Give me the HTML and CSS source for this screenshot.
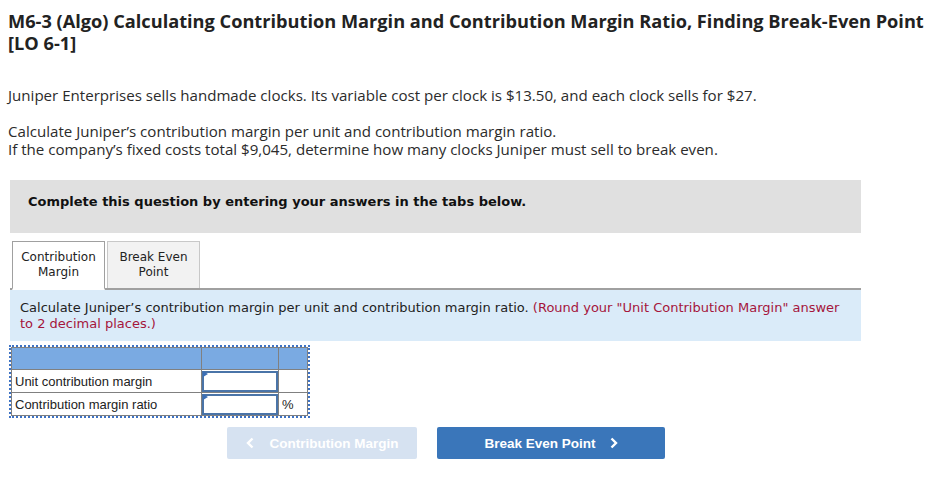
FILE: index.html
```html
<!DOCTYPE html>
<html>
<head>
<meta charset="utf-8">
<link rel="stylesheet" href="styles.css">
</head>
<body>
<div class="page">
  <h1 class="title">M6-3 (Algo) Calculating Contribution Margin and Contribution Margin Ratio, Finding Break-Even Point <span class="nowrap">[LO 6-1]</span></h1>
  <p class="intro first">Juniper Enterprises sells handmade clocks. Its variable cost per clock is $13.50, and each clock sells for $27.</p>
  <p class="intro">Calculate Juniper’s contribution margin per unit and contribution margin ratio.<br>If the company’s fixed costs total $9,045, determine how many clocks Juniper must sell to break even.</p>

  <div class="notice">Complete this question by entering your answers in the tabs below.</div>

  <div class="tabs">
    <div class="tab active">Contribution<br>Margin</div>
    <div class="tab">Break Even<br>Point</div>
  </div>
  <div class="instr">Calculate Juniper’s contribution margin per unit and contribution margin ratio. <span class="hint">(Round your "Unit Contribution Margin" answer to 2 decimal places.)</span></div>

  <div class="tablewrap">
    <table class="grid">
      <tr class="head"><td class="c1"></td><td class="c2"></td><td class="c3"></td></tr>
      <tr><td class="c1">Unit contribution margin</td><td class="c2 inp"><div class="box"><span class="flag"></span></div></td><td class="c3"></td></tr>
      <tr><td class="c1">Contribution margin ratio</td><td class="c2 inp"><div class="box"><span class="flag"></span></div></td><td class="c3">%</td></tr>
    </table>
  </div>

  <div class="nav">
    <div class="btn prev"><svg class="chev" width="8" height="12" viewBox="0 0 8 12"><path d="M6.5 1.5 L2 6 L6.5 10.5" fill="none" stroke="#fff" stroke-width="2.4"/></svg>Contribution Margin</div>
    <div class="btn next">Break Even Point<svg class="chev" width="8" height="12" viewBox="0 0 8 12"><path d="M1.5 1.5 L6 6 L1.5 10.5" fill="none" stroke="#fff" stroke-width="2.4"/></svg></div>
  </div>
</div>
</body>
</html>
```
FILE: styles.css
```css
html, body { margin: 0; padding: 0; background: #fff; }
.page { padding: 10px 8px 0 8px; width: 935px; }
.title {
  font-family: "Open Sans", "Liberation Sans", sans-serif;
  font-weight: 700;
  font-size: 18.2px;
  line-height: 22px;
  color: #222;
  margin: 0;
  width: 935px;
}
.nowrap { white-space: nowrap; }
.intro {
  font-family: "Open Sans", "Liberation Sans", sans-serif;
  font-size: 15.1px;
  line-height: 18px;
  color: #2b2b2b;
  margin: 18px 0 0 0;
}
.intro.first { margin-top: 32px; }
.notice {
  margin: 22px 0 0 2px;
  width: 851px;
  height: 53px;
  box-sizing: border-box;
  padding: 13px 18px 0 18px;
  background: #e0e0e0;
  font-family: "DejaVu Sans", Verdana, sans-serif;
  font-weight: 700;
  font-size: 13px;
  line-height: 18px;
  color: #111;
}
.tabs {
  display: flex;
  gap: 2px;
  margin: 8px 0 0 2px;
  width: 851px;
  border-bottom: 2px solid #a0a0a0;
  padding-left: 2px;
  box-sizing: border-box;
}
.tab {
  width: 93px;
  height: 47px;
  box-sizing: border-box;
  margin-bottom: -2px;
  padding-top: 8px;
  text-align: center;
  font-family: "DejaVu Sans", Verdana, sans-serif;
  font-size: 12px;
  line-height: 15px;
  color: #222;
  background: #f2f2f2;
  border: 1px solid #c8c8c8;
  border-bottom: none;
}
.tab.active {
  background: #fff;
  border: 1px solid #a0a0a0;
  border-bottom: 2px solid #fff;
  height: 49px;
}
.instr {
  margin-left: 2px;
  width: 851px;
  box-sizing: border-box;
  background: #daebf9;
  padding: 10px 10px 9px 10px;
  font-family: "DejaVu Sans", Verdana, sans-serif;
  font-size: 13px;
  line-height: 16px;
  color: #222;
}
.hint { color: #a5163c; }
.tablewrap {
  margin: 4px 0 0 1px;
  width: max-content;
  border: 2px dotted #3d72c4;
}
.grid {
  border-collapse: collapse;
  font-family: "Liberation Sans", Arial, sans-serif;
  font-size: 13px;
  color: #222;
}
.grid td {
  border: 1px solid #808080;
  padding: 0 3px;
  height: 22px;
}
.grid tr.head td { background: #7aaae2; height: 21px; }
.grid .c1 { width: 183px; }
.grid .c2 { width: 76px; padding: 0; }
.grid .c3 { width: 22px; }
.grid td.inp { position: relative; }
.box {
  height: 21px;
  border: 2px solid #4a74a8;
  box-sizing: border-box;
  background: #fff;
}
.flag {
  position: absolute;
  left: 1px;
  top: 1px;
  width: 0; height: 0;
  border-top: 3px solid transparent;
  border-bottom: 3px solid transparent;
  border-left: 5px solid #3b6fb6;
}
.nav {
  display: flex;
  gap: 20px;
  margin: 9px 0 0 219px;
}
.btn {
  height: 32px;
  box-sizing: border-box;
  border-radius: 2px;
  font-family: "Liberation Sans", Arial, sans-serif;
  font-weight: 700;
  font-size: 13.5px;
  color: #fff;
  display: flex;
  align-items: center;
  justify-content: center;
}
.btn.prev { width: 190px; background: #d6e2f1; }
.btn.next { width: 228px; background: #3a76ba; }
.prev .chev { margin-right: 16px; }
.next .chev { margin-left: 14px; }
```
